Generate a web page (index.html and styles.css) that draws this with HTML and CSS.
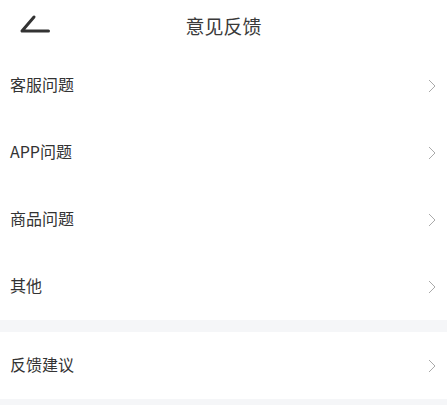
FILE: index.html
```html
<!DOCTYPE html>
<html lang="zh">
<head>
<meta charset="utf-8">
<link rel="stylesheet" href="styles.css">
</head>
<body>
<header class="nav">
  <svg class="back" width="40" height="24" viewBox="0 0 40 24"><path d="M24 4 L12 18 H38.5" fill="none" stroke="#333" stroke-width="3" stroke-linecap="round" stroke-linejoin="round"/></svg>
  <h1 class="title">意见反馈</h1>
</header>
<section class="group">
  <div class="row"><span class="label">客服问题</span><svg class="chev" width="8" height="14" viewBox="0 0 8 14"><path d="M1 1 L7 7 L1 13" fill="none" stroke="#aaa" stroke-width="1"/></svg></div>
  <div class="row"><span class="label">APP问题</span><svg class="chev" width="8" height="14" viewBox="0 0 8 14"><path d="M1 1 L7 7 L1 13" fill="none" stroke="#aaa" stroke-width="1"/></svg></div>
  <div class="row"><span class="label">商品问题</span><svg class="chev" width="8" height="14" viewBox="0 0 8 14"><path d="M1 1 L7 7 L1 13" fill="none" stroke="#aaa" stroke-width="1"/></svg></div>
  <div class="row"><span class="label">其他</span><svg class="chev" width="8" height="14" viewBox="0 0 8 14"><path d="M1 1 L7 7 L1 13" fill="none" stroke="#aaa" stroke-width="1"/></svg></div>
</section>
<section class="group">
  <div class="row"><span class="label">反馈建议</span><svg class="chev" width="8" height="14" viewBox="0 0 8 14"><path d="M1 1 L7 7 L1 13" fill="none" stroke="#aaa" stroke-width="1"/></svg></div>
</section>
</body>
</html>
```
FILE: styles.css
```css
html, body {
  margin: 0;
  padding: 0;
  background: #f5f6f8;
  font-family: "Noto Sans CJK SC", "Noto Sans", sans-serif;
  color: #333;
}
.nav {
  height: 52px;
  background: #fff;
  display: grid;
  grid-template-columns: 1fr auto 1fr;
  align-items: center;
}
.back {
  display: block;
  margin-left: 10px;
  margin-top: -3px;
}
.title {
  margin: 0;
  font-size: 19px;
  font-weight: 400;
  color: #3a3a3a;
  line-height: 1;
  margin-top: -2px;
}
.group {
  background: #fff;
  margin-bottom: 12px;
}
.row {
  height: 67px;
  display: flex;
  align-items: center;
  justify-content: space-between;
  padding: 0 10px 0 10px;
}
.label {
  font-size: 16px;
  line-height: 1;
  margin-top: -4px;
  color: #333;
}
.chev {
  display: block;
  margin-right: 1px;
}
```
